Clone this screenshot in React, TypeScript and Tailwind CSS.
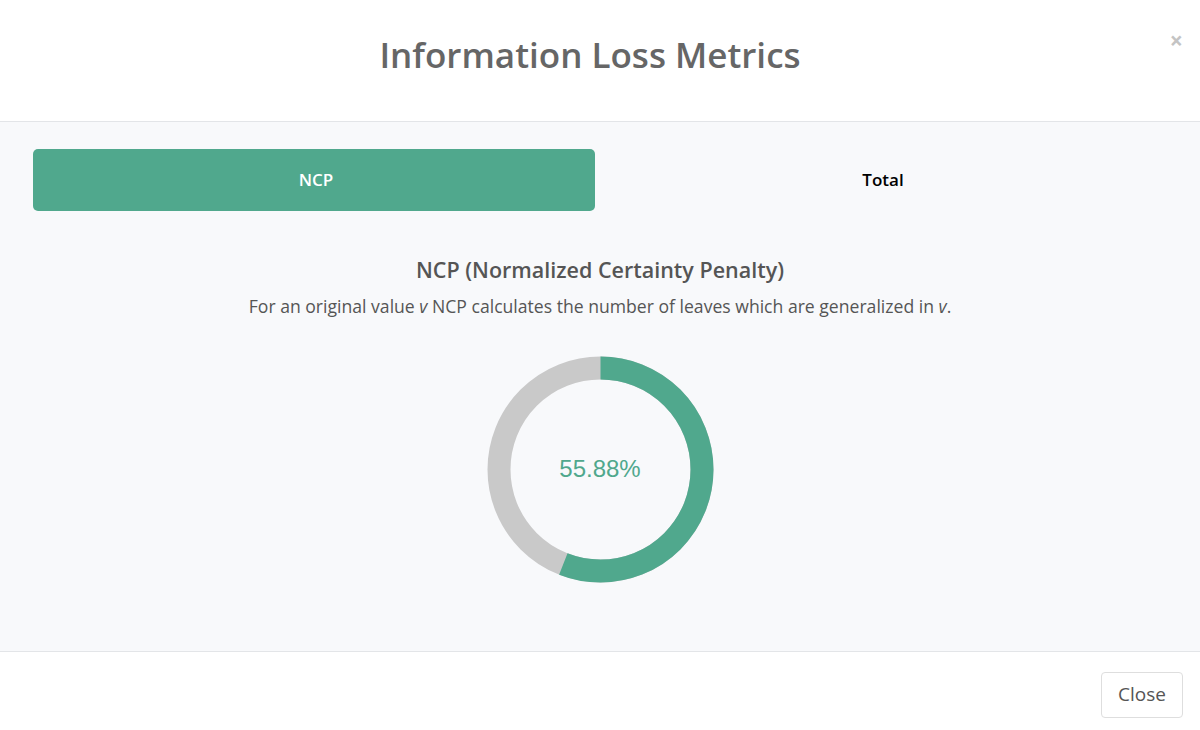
import { useState } from "react";

const GREEN = "#50a88d";

function Donut({ value }: { value: number }) {
  const r = 101.5;
  const c = 2 * Math.PI * r;
  return (
    <div className="relative h-[227px] w-[227px]">
      <svg width="227" height="227" viewBox="0 0 227 227">
        <circle cx="113.5" cy="113.5" r={r} fill="none" stroke="#c9c9c9" strokeWidth="23" />
        <circle
          cx="113.5"
          cy="113.5"
          r={r}
          fill="none"
          stroke={GREEN}
          strokeWidth="23"
          strokeDasharray={`${(c * value) / 100} ${c}`}
          transform="rotate(-90 113.5 113.5)"
        />
      </svg>
      <div className="absolute inset-0 flex items-center justify-center font-['Liberation_Sans',Arial,sans-serif] text-[24px] text-[#50a88d]">
        {value.toFixed(2)}%
      </div>
    </div>
  );
}

export default function App() {
  const [tab, setTab] = useState<"ncp" | "total">("ncp");

  return (
    <div className="flex h-[730px] w-[1200px] flex-col bg-white font-['Open_Sans',sans-serif] text-[#555]">
      <header className="relative flex h-[122px] shrink-0 items-center justify-center border-b border-[#e3e5e8] pr-[20px]">
        <h1 className="-mt-[10px] text-[35px] font-semibold text-[#666]">Information Loss Metrics</h1>
        <button className="absolute right-[17px] top-[29px] text-[23px] font-bold leading-none text-[#c4c4c4]">
          ×
        </button>
      </header>

      <main className="flex flex-1 flex-col items-center bg-[#f8f9fb] px-[33px] pt-[27px]">
        <div className="grid w-full grid-cols-2 gap-[10px]">
          <button
            onClick={() => setTab("ncp")}
            className={
              tab === "ncp"
                ? "h-[62px] rounded-[5px] bg-[#50a88d] pl-[4px] text-[17px] font-semibold text-white"
                : "h-[62px] rounded-[5px] text-[17px] font-semibold text-black"
            }
          >
            NCP
          </button>
          <button
            onClick={() => setTab("total")}
            className={
              tab === "total"
                ? "h-[62px] rounded-[5px] bg-[#50a88d] text-[17px] font-semibold text-white"
                : "h-[62px] rounded-[5px] pr-[6px] text-[17px] font-semibold text-black"
            }
          >
            Total
          </button>
        </div>

        <h2 className="mt-[43px] text-[21.5px] font-semibold text-[#555]">
          NCP (Normalized Certainty Penalty)
        </h2>
        <p className="mt-[7px] text-[17.6px] text-[#555]">
          For an original value <i>v</i> NCP calculates the number of leaves which are generalized in <i>v</i>.
        </p>

        <div className="mt-[36px]">
          <Donut value={55.88} />
        </div>
      </main>

      <footer className="flex h-[79px] shrink-0 items-center justify-end border-t border-[#e3e5e8] px-[17px]">
        <button className="mt-[7px] h-[46px] w-[82px] rounded-[4px] border border-[#dedede] bg-white text-[19px] text-[#555]">
          Close
        </button>
      </footer>
    </div>
  );
}
